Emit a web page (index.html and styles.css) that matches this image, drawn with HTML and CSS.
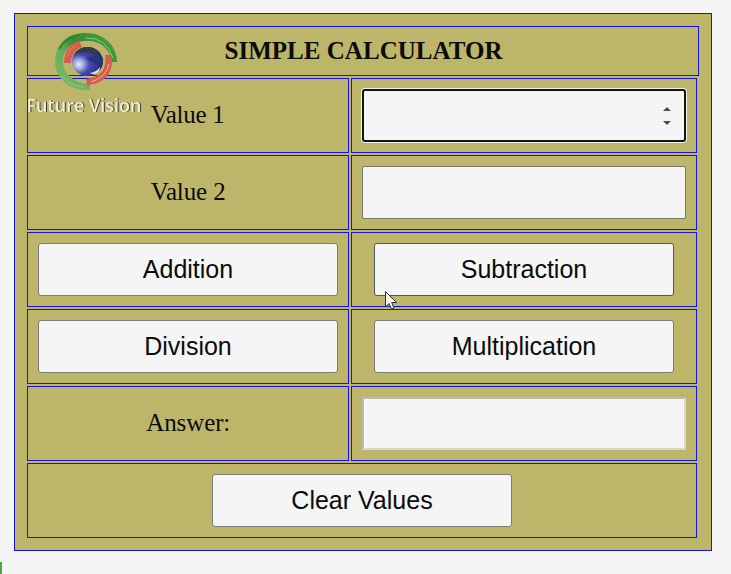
FILE: index.html
```
<!DOCTYPE html>
<html lang="en">
<head>
<meta charset="utf-8">
<title>Simple Calculator</title>
<link rel="stylesheet" href="styles.css">
</head>
<body>
<main class="calculator">
  <h1 class="title"><svg class="line" width="278" height="30"><text x="0.5" y="23" textLength="278">SIMPLE CALCULATOR</text></svg></h1>
  <div class="grid">
    <div class="cell"><svg class="line" width="76" height="30"><text x="0.700" y="22" textLength="74">Value 1</text></svg></div>
    <div class="cell"><div class="field focused"><svg width="8" height="18" viewBox="0 0 8 18"><path d="M0 4 4 0 8 4zM0 14 4 18 8 14z" fill="#46544c"/></svg></div></div>
    <div class="cell"><svg class="line" width="76" height="30"><text x="0.700" y="22" textLength="75">Value 2</text></svg></div>
    <div class="cell"><div class="field"></div></div>
    <div class="cell"><button>Addition</button></div>
    <div class="cell"><button class="hover">Subtraction</button></div>
    <div class="cell"><button>Division</button></div>
    <div class="cell"><button>Multiplication</button></div>
    <div class="cell"><svg class="line" width="84" height="30"><text x="0.300" y="22" textLength="84">Answer:</text></svg></div>
    <div class="cell"><div class="field answer"></div></div>
    <div class="cell wide"><button>Clear Values</button></div>
  </div>
</main>
<svg class="logo" width="124" height="92" viewBox="22 28 124 92">
  <defs>
    <radialGradient id="globe" cx=".22" cy=".6" r=".75">
      <stop offset="0" stop-color="#e4edf3"/><stop offset=".2" stop-color="#a2b1dc"/><stop offset=".45" stop-color="#4747b3"/><stop offset="1" stop-color="#202c78"/>
    </radialGradient>
    <linearGradient id="ring" x1="0" y1="1" x2="1" y2="0">
      <stop offset="0" stop-color="#7fbd6c"/><stop offset=".4" stop-color="#67ad5a"/><stop offset=".58" stop-color="#3b8b36"/><stop offset="1" stop-color="#46a43e"/>
    </linearGradient>
    <clipPath id="ball"><ellipse cx="87.500" cy="61.500" rx="15.500" ry="14.500"/></clipPath>
  </defs>
  <path d="M90 90C70 91 55 79 55 61C56 43 68 33 86 33C104 33 117 46 117 62L112 62C110 49 101 41 88 41C73 40 63 49 63 62C63 74 76 84 90 84z" fill="url(#ring)"/>
  <path d="M59 49Q66 37 80 35" fill="none" stroke="#377d35" stroke-width="1.500"/>
  <path d="M86 38Q106 37 113 58" fill="none" stroke="#8cca80" stroke-width="1"/>
  <path d="M62 76Q70 86 84 87" fill="none" stroke="#99c98a" stroke-width="1"/>
  <path d="M64 63Q64 46 79 41L82 47Q71 51 71 63z" fill="#d75c4b"/>
  <path d="M67 57Q69 49 75 46" fill="none" stroke="#e67c69" stroke-width="1"/>
  <path d="M105 55H111C115 72 105 84 87 85L86 79C101 77 107 69 105 55z" fill="#d75c4b"/>
  <path d="M109 64Q107 77 91 82" fill="none" stroke="#f1b7a5" stroke-width="1"/>
  <ellipse cx="87.500" cy="61.500" rx="15.500" ry="14.500" fill="url(#globe)"/>
  <g clip-path="url(#ball)">
    <path d="M72 47H103V54Q87 51 72 54z" fill="#353b43"/>
    <path d="M86 57 103 56V65Q96 65 91 62z" fill="#25377b"/>
    <path d="M90 73Q97 72 100 67L99 72Q95 76 90 73z" fill="#e2e8ee"/>
  </g>
  <text x="26.500" y="112" textLength="115" lengthAdjust="spacingAndGlyphs">Future Vision</text>
</svg>
<svg class="cursor" width="13" height="20" viewBox="0 0 13 20"><path d="M.5.5V16L4 12.500 6.500 18 9 17 6.700 11.500H11.500z" fill="#f5f5f5" stroke="#26312c"/></svg>
<i class="marker"></i>
</body>
</html>
```
FILE: styles.css
```
* { box-sizing: border-box; }
body {
  margin: 0;
  padding: 13px 0 0 14px;
  height: 574px;
  overflow: hidden;
  background: #f5f5f5;
  color: #0b0b0b;
  font-family: "Liberation Serif", serif;
  font-size: 25px;
}
.calculator {
  width: 698px;
  height: 538px;
  padding: 12px;
  border: 1px solid #1414e0;
  background: #bcb56a;
}
.title {
  display: flex;
  align-items: center;
  justify-content: center;
  width: 672px;
  height: 50px;
  margin: 0 0 2px;
  border: 1px solid #1414e0;
  font-size: 25px;
}
.line { display: block; overflow: visible; fill: currentColor; }
.grid {
  display: grid;
  grid-template-columns: 322px 346px;
  grid-auto-rows: 75px;
  gap: 2px;
}
.cell {
  display: flex;
  align-items: center;
  justify-content: center;
  border: 1px solid #1414e0;
}
.wide { grid-column: 1 / -1; }
.field {
  display: flex;
  align-items: center;
  justify-content: flex-end;
  width: 324px;
  height: 53px;
  padding-right: 13px;
  border: 1px solid #77776f;
  border-radius: 2px;
  background: #f5f5f5;
}
.focused {
  border: 2px solid #101512;
  border-radius: 3px;
  box-shadow: 0 0 0 1px #f0f0e8;
}
.answer {
  border: 2px solid;
  border-color: #b9b9b9 #d6d6d2 #d6d6d2 #b9b9b9;
  border-radius: 0;
}
button {
  width: 300px;
  height: 53px;
  padding: 0;
  border: 1px solid #7b7b78;
  border-radius: 3px;
  background: #f5f5f5;
  color: #0b0b0b;
  font: 25px "Liberation Sans", sans-serif;
}
.hover { border-color: #515b54; }
.logo { position: absolute; left: 22px; top: 28px; }
.logo text {
  font: 600 18px "Open Sans", sans-serif;
  fill: #f1eedc;
  filter: drop-shadow(1.5px 0.5px 0 #3b3a29);
}
.cursor { position: absolute; left: 385px; top: 291px; }
.marker { position: absolute; left: 0; top: 562px; width: 2px; height: 12px; background: #4da63f; }
```
